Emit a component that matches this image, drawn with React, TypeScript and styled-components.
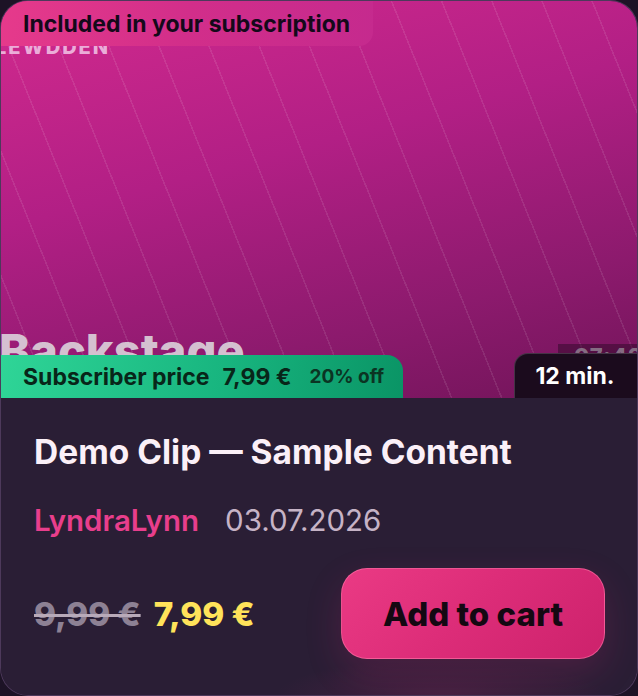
import React from 'react'
import styled, { createGlobalStyle } from 'styled-components'

const GlobalStyle = createGlobalStyle`
  html, body {
    margin: 0;
    padding: 0;
    background: #1d1326;
  }
  body {
    font-family: Inter, 'Noto Sans', sans-serif;
  }
`

type Clip = {
  title: string
  author: string
  date: string
  duration: string
  oldPrice: string
  price: string
  discount: string
}

const clip: Clip = {
  title: 'Demo Clip — Sample Content',
  author: 'LyndraLynn',
  date: '03.07.2026',
  duration: '12 min.',
  oldPrice: '9,99 €',
  price: '7,99 €',
  discount: '20% off',
}

export default function App() {
  return (
    <>
      <GlobalStyle />
      <Card>
        <Thumb>
          <Watermark>LEWDDEN</Watermark>
          <PosterTitle>Backstage</PosterTitle>
          <Timestamp>07:42</Timestamp>
          <IncludedBadge>Included in your subscription</IncludedBadge>
          <SubscriberBadge>
            <SubLabel>Subscriber price</SubLabel>
            <SubPrice>{clip.price}</SubPrice>
            <SubOff>{clip.discount}</SubOff>
          </SubscriberBadge>
          <Duration>{clip.duration}</Duration>
        </Thumb>
        <Body>
          <Title>{clip.title}</Title>
          <Meta>
            <Author>{clip.author}</Author>
            <DateText>{clip.date}</DateText>
          </Meta>
          <Footer>
            <Prices>
              <OldPrice>{clip.oldPrice}</OldPrice>
              <Price>{clip.price}</Price>
            </Prices>
            <CartButton>Add to cart</CartButton>
          </Footer>
        </Body>
      </Card>
    </>
  )
}

const Card = styled.div`
  box-sizing: border-box;
  width: 638px;
  height: 696px;
  border: 1px solid rgba(170, 130, 190, 0.28);
  border-radius: 28px;
  overflow: hidden;
  background: #2a1e35;
  display: flex;
  flex-direction: column;
`

const Thumb = styled.div`
  position: relative;
  height: 397px;
  flex-shrink: 0;
  overflow: hidden;
  background:
    repeating-linear-gradient(
      68deg,
      transparent 0px,
      transparent 45px,
      rgba(255, 255, 255, 0.09) 45px,
      rgba(255, 255, 255, 0.09) 46.5px
    ),
    linear-gradient(165deg, #d22a8e 0%, #b21f85 40%, #8c1a6d 75%, #711459 100%);
`

const Watermark = styled.div`
  position: absolute;
  left: -6px;
  top: 36px;
  font-size: 20px;
  font-weight: 800;
  letter-spacing: 2px;
  color: rgba(245, 210, 238, 0.8);
  line-height: 1;
`

const PosterTitle = styled.div`
  position: absolute;
  left: -2px;
  top: 326px;
  font-size: 47px;
  font-weight: 800;
  color: rgba(222, 216, 222, 0.88);
  line-height: 1;
`

const Timestamp = styled.div`
  position: absolute;
  right: 0;
  top: 343px;
  width: 79px;
  height: 40px;
  padding-left: 16px;
  box-sizing: border-box;
  background: rgba(45, 8, 40, 0.5);
  font-size: 22px;
  font-weight: 800;
  letter-spacing: 1px;
  color: rgba(140, 122, 140, 0.9);
  line-height: 24px;
  white-space: nowrap;
`

const IncludedBadge = styled.div`
  position: absolute;
  left: 0;
  top: 0;
  height: 45px;
  padding: 0 22px;
  width: 372px;
  box-sizing: border-box;
  display: flex;
  align-items: center;
  border-bottom-right-radius: 14px;
  background: linear-gradient(100deg, #e63a8b 0%, #d22e8a 50%, #c52a8e 100%);
  color: #14091a;
  font-size: 23px;
  font-weight: 700;
  white-space: nowrap;
`

const SubscriberBadge = styled.div`
  position: absolute;
  left: 0;
  bottom: 0;
  height: 43px;
  width: 402px;
  box-sizing: border-box;
  padding: 0 22px;
  display: flex;
  align-items: center;
  border-top-right-radius: 16px;
  background: linear-gradient(100deg, #2fd597 0%, #18b57f 55%, #0a9465 100%);
  color: #082619;
  font-weight: 700;
  white-space: nowrap;
`

const SubLabel = styled.span`
  font-size: 23px;
`

const SubPrice = styled.span`
  font-size: 23px;
  margin-left: 13px;
`

const SubOff = styled.span`
  font-size: 19px;
  margin-left: 18px;
  color: #0b3423;
`

const Duration = styled.div`
  position: absolute;
  right: 0;
  bottom: 0;
  height: 45px;
  width: 123px;
  box-sizing: border-box;
  display: flex;
  align-items: center;
  justify-content: center;
  padding-right: 2px;
  background: #1b0b1d;
  border: 1px solid rgba(120, 100, 120, 0.45);
  border-right: none;
  border-bottom: none;
  border-top-left-radius: 14px;
  color: #ffffff;
  font-size: 23px;
  font-weight: 700;
  white-space: nowrap;
`

const Body = styled.div`
  flex: 1;
  display: flex;
  flex-direction: column;
  padding: 34px 32px 0 33px;
  background:
    radial-gradient(ellipse 220px 50px at 440px 298px, rgba(150, 40, 100, 0.25), transparent 75%),
    #2a1e35;
`

const Title = styled.div`
  font-size: 33.5px;
  font-weight: 700;
  color: #fbf0f8;
  line-height: 40px;
  white-space: nowrap;
`

const Meta = styled.div`
  display: flex;
  align-items: baseline;
  gap: 26px;
  margin-top: 30px;
  font-size: 29.5px;
  line-height: 36px;
`

const Author = styled.span`
  color: #e83e8c;
  font-weight: 600;
`

const DateText = styled.span`
  color: #c6b3c6;
  font-weight: 400;
`

const Footer = styled.div`
  display: flex;
  align-items: center;
  justify-content: space-between;
  margin-top: 30px;
`

const Prices = styled.div`
  display: flex;
  align-items: baseline;
  gap: 13px;
  font-size: 33.3px;
  font-weight: 800;
`

const OldPrice = styled.span`
  color: #8d8194;
  text-decoration: line-through;
  text-decoration-color: #b8aab9;
  text-decoration-thickness: 3px;
`

const Price = styled.span`
  color: #ffe35a;
`

const CartButton = styled.button`
  width: 264px;
  height: 91px;
  border-radius: 26px;
  border: 1px solid rgba(255, 120, 170, 0.55);
  background: linear-gradient(135deg, #ea3a84 0%, #dc2c78 50%, #cd226c 100%);
  box-shadow: 0 14px 36px rgba(220, 40, 120, 0.18);
  color: #140812;
  font-family: Inter, 'Noto Sans', sans-serif;
  font-size: 33px;
  font-weight: 800;
  cursor: pointer;
`
